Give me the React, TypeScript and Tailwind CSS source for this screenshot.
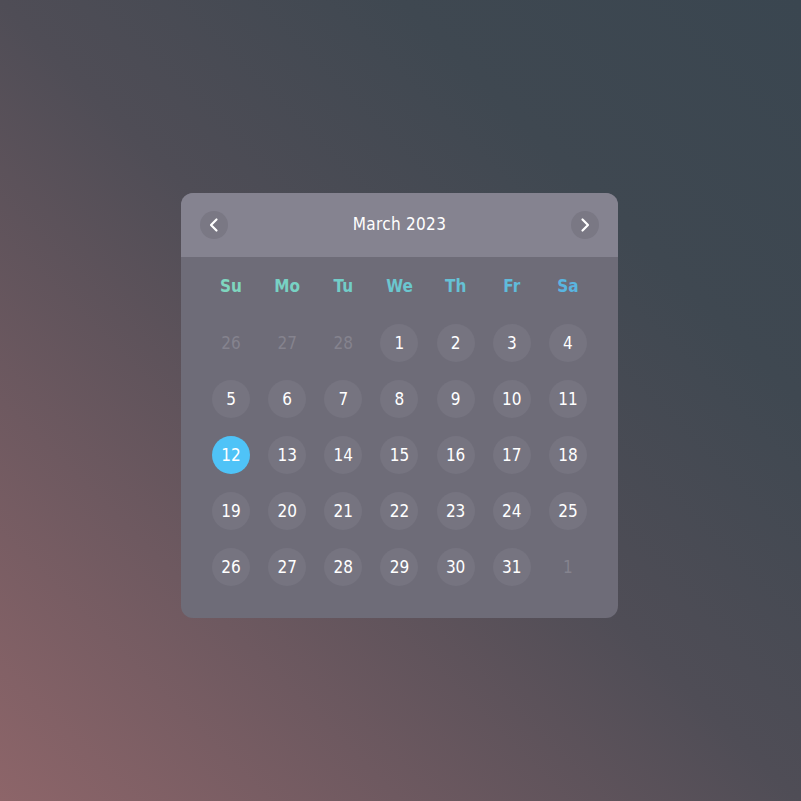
import { FC } from 'react';

const dayNames = [
  { label: 'Su', color: 'text-[#7fd6bf]' },
  { label: 'Mo', color: 'text-[#78d2c4]' },
  { label: 'Tu', color: 'text-[#72cdc8]' },
  { label: 'We', color: 'text-[#6bc7cf]' },
  { label: 'Th', color: 'text-[#66c1d5]' },
  { label: 'Fr', color: 'text-[#60bbdb]' },
  { label: 'Sa', color: 'text-[#5ab5e0]' },
];

type Cell = { day: number; muted?: boolean };

const cells: Cell[] = [
  { day: 26, muted: true },
  { day: 27, muted: true },
  { day: 28, muted: true },
  ...Array.from({ length: 31 }, (_, i) => ({ day: i + 1 })),
  { day: 1, muted: true },
];

const Chevron: FC<{ dir: 'left' | 'right' }> = ({ dir }) => (
  <svg width="16" height="16" viewBox="0 0 16 16" fill="none">
    <path
      d={dir === 'left' ? 'M10.5 2.5 L5 8 L10.5 13.5' : 'M5.5 2.5 L11 8 L5.5 13.5'}
      stroke="white"
      strokeWidth="2.2"
      strokeLinecap="round"
      strokeLinejoin="round"
    />
  </svg>
);

const App: FC = () => {
  return (
    <div className="min-h-screen w-full flex items-center justify-center bg-[linear-gradient(45deg,#8d6569_0%,#6e5960_25%,#4f4d56_50%,#3f4851_75%,#3a4650_100%)] font-['DejaVu_Sans',sans-serif] font-stretch-condensed">
      <div className="w-[437px] rounded-xl overflow-hidden bg-[#6e6c78] mt-[9px] mr-[2px]">
        <div className="h-16 bg-[#858390] flex items-center justify-between px-[19px]">
          <button className="w-7 h-7 rounded-full bg-[#7a7884] flex items-center justify-center">
            <Chevron dir="left" />
          </button>
          <span className="text-white text-[17px] tracking-[0.3px]">March 2023</span>
          <button className="w-7 h-7 rounded-full bg-[#7a7884] flex items-center justify-center">
            <Chevron dir="right" />
          </button>
        </div>
        <div className="px-[22px] pt-[17px] pb-[32px]">
          <div className="grid grid-cols-7 h-[24px] mb-[26px]">
            {dayNames.map((d) => (
              <div key={d.label} className={`text-center text-[17px] font-semibold leading-[24px] ${d.color}`}>
                {d.label}
              </div>
            ))}
          </div>
          <div className="grid grid-cols-7 gap-y-[18px]">
            {cells.map((c, i) => (
              <div key={i} className="flex items-center justify-center">
                <div
                  className={
                    c.muted
                      ? 'w-[38px] h-[38px] flex items-center justify-center text-[17px] text-[#85838e] pt-[2px]'
                      : c.day === 12
                        ? 'w-[38px] h-[38px] rounded-full flex items-center justify-center text-[17px] text-white bg-[#4fc3f7] pt-[2px]'
                        : 'w-[38px] h-[38px] rounded-full flex items-center justify-center text-[17px] text-white bg-[#767480] pt-[2px]'
                  }
                >
                  {c.day}
                </div>
              </div>
            ))}
          </div>
        </div>
      </div>
    </div>
  );
};

export default App;
